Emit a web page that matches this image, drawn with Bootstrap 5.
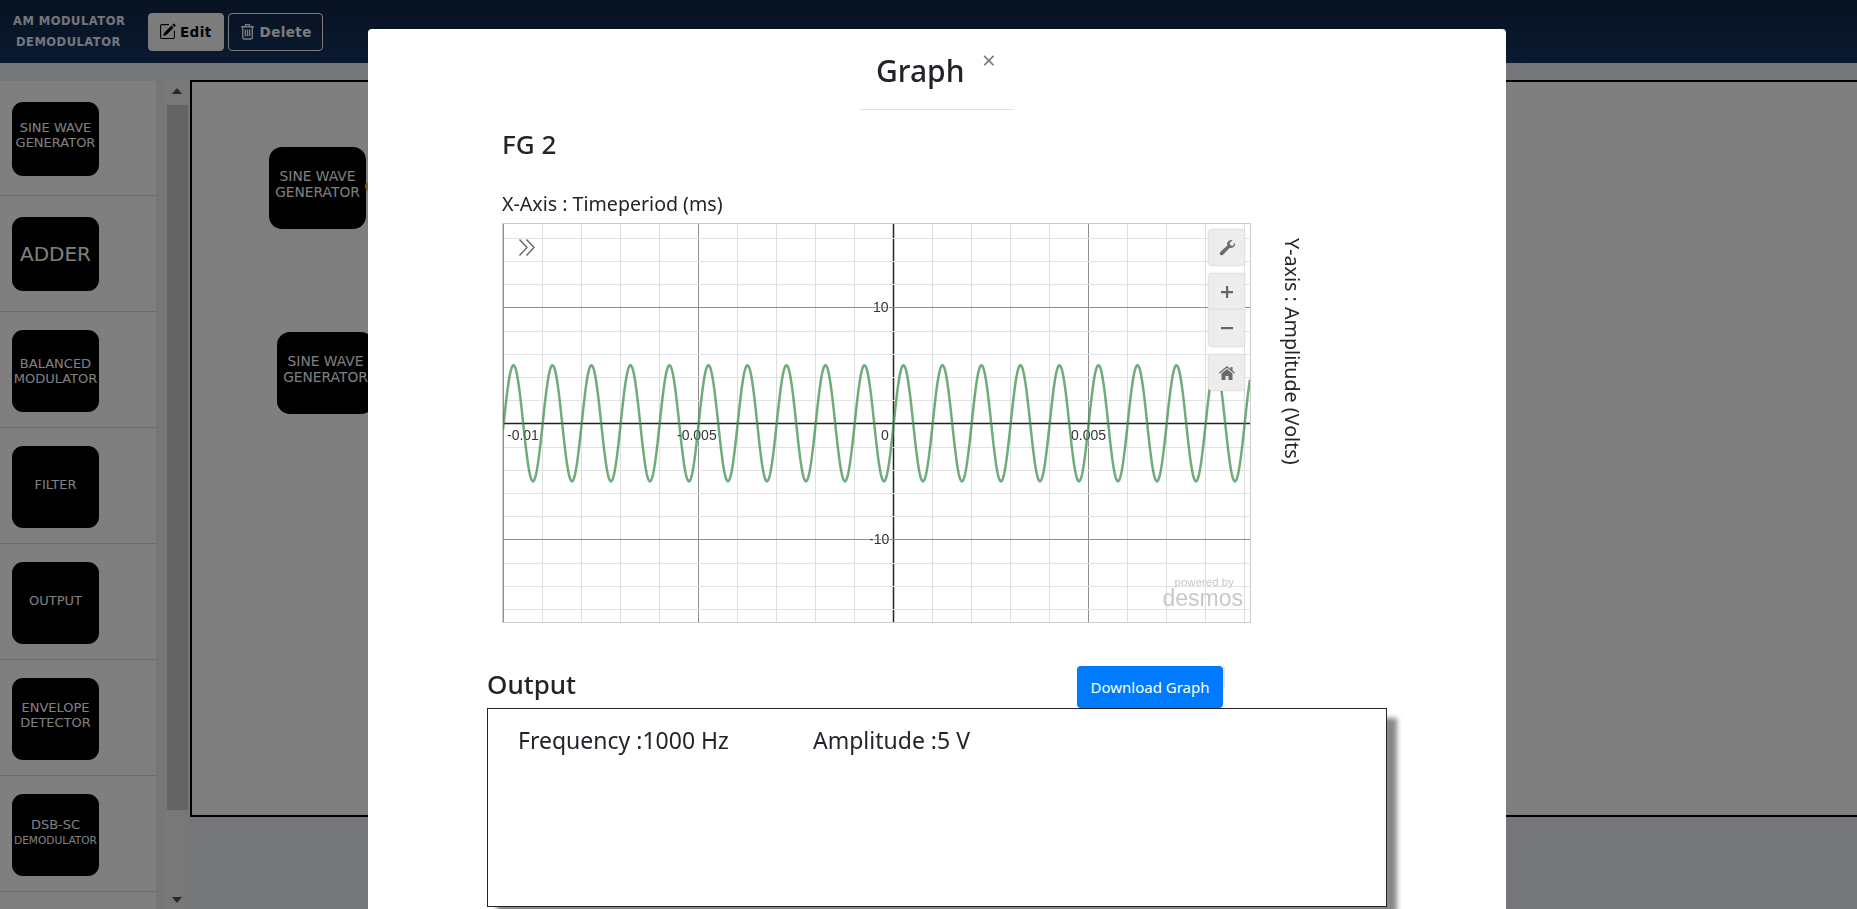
<!DOCTYPE html>
<html lang="en">

<head>
    <meta charset="UTF-8" />
    <meta name="viewport" content="width=device-width, initial-scale=1.0" />
    <title>AM Modulator Demodulator</title>
    <link rel="stylesheet" href="https://cdn.jsdelivr.net/npm/bootstrap@5.3.0/dist/css/bootstrap.min.css" />
    <style>
        html, body {
            height: 100%;
            overflow: hidden;
        }

        body {
            background: #e8ecf4;
            font-family: "Noto Sans", "Open Sans", sans-serif;
        }

        /* page under the backdrop */
        .top-bar {
            height: 63px;
            background: linear-gradient(#0f2444, #153462);
            padding-left: 13px;
        }

        .brand-text {
            width: 135px;
            font: bold 11.5px/21px "DejaVu Sans", sans-serif;
            color: #e6ecf5;
            letter-spacing: .5px;
        }

        .brand-text span {
            display: block;
            padding-left: 3px;
        }

        .bar-btn {
            height: 38px;
            font: bold 13.5px "DejaVu Sans", sans-serif;
            letter-spacing: .4px;
            padding: 0 10px;
            border-radius: 4px;
        }

        .bar-btn svg {
            width: 17px;
            height: 17px;
            margin-right: 4px;
            vertical-align: -3px;
        }

        .edit-btn {
            padding-right: 11px;
        }

        .delete-btn {
            margin-left: 4px;
        }

        .work-area {
            padding-top: 17px;
            height: calc(100vh - 63px);
        }

        .side-list {
            width: 156px;
            flex-shrink: 0;
            margin-top: 1px;
            background: #fff;
            overflow: hidden;
        }

        .side-item {
            height: 116px;
            border-bottom: 1px solid #ddd;
            padding: 18px 0 0 12px;
        }

        .side-item.first-item {
            height: 115px;
            padding-top: 21px;
        }

        .side-item.short-item {
            padding-top: 21px;
        }

        .block-tile {
            width: 87px;
            height: 82px;
            background: #000;
            border-radius: 11px;
            color: #fff;
            text-align: center;
            font: 13px/14.5px "DejaVu Sans", sans-serif;
            overflow: hidden;
        }

        .short-item .block-tile {
            height: 74px;
        }

        .tile-two {
            padding-top: 19px;
        }

        .tile-adder {
            font-size: 20px;
            line-height: 24px;
            padding-top: 25px;
        }

        .tile-bal {
            padding-top: 27px;
        }

        .tile-one {
            padding-top: 32px;
        }

        .tile-env {
            padding-top: 23px;
        }

        .tile-demod {
            padding-top: 24px;
        }

        .tile-demod small {
            display: block;
            font-size: 10.6px;
            white-space: nowrap;
        }

        .scroll-track {
            width: 25px;
            flex-shrink: 0;
            margin-left: 9px;
            background: #f1f1f1;
            padding: 25px 2px 9px;
        }

        .scroll-thumb {
            height: 705px;
            background: #c6c6c6;
        }

        .arrow-up,
        .arrow-down {
            position: absolute;
            left: 7px;
            width: 0;
            height: 0;
            border-left: 5.5px solid transparent;
            border-right: 5.5px solid transparent;
        }

        .arrow-up {
            top: 8px;
            border-bottom: 6px solid #505050;
        }

        .arrow-down {
            bottom: 6px;
            border-top: 6px solid #505050;
        }

        .block-canvas {
            flex: 1 1 auto;
            height: 737px;
            border: 2px solid #000;
            border-right: 0;
            background: #fff;
        }

        .placed-node {
            position: absolute;
            width: 97px;
            height: 82px;
            background: #000;
            color: #fff;
            border-radius: 13px;
            text-align: center;
            font: 13.8px/15.5px "DejaVu Sans", sans-serif;
            padding-top: 22px;
        }

        .node-a {
            left: 77px;
            top: 65px;
        }

        .node-b {
            left: 85px;
            top: 250px;
        }

        .port-dot {
            position: absolute;
            right: -8px;
            top: 35px;
            width: 9px;
            height: 9px;
            border-radius: 50%;
            background: #ffc107;
        }

        /* graph modal */
        .graph-dialog {
            max-width: none;
            width: 1138px;
            margin: 29px 0 0 368px;
        }

        .graph-content {
            height: 1100px;
            border: 0;
            border-radius: 4px;
        }

        .graph-head {
            width: 154px;
            height: 81px;
            margin: 0 auto;
            padding: 23px 16px 0;
            border-bottom: 1px solid #dee2e6;
            position: relative;
        }

        .graph-title {
            font-size: 30px;
            line-height: 38px;
            font-weight: 500;
            color: #212529;
            margin: 0;
        }

        .head-close {
            position: absolute;
            left: 122px;
            top: 17px;
            font-size: 24px;
            line-height: 28px;
            color: #7b7b7b;
            background: none;
            border: 0;
            padding: 0;
        }

        .plot-area {
            margin-left: 134px;
            padding-top: 15px;
        }

        .fg-name {
            font-size: 26px;
            line-height: 38px;
            font-weight: 500;
            color: #212529;
            margin: 0 0 28px;
        }

        .axis-x {
            font-size: 19.6px;
            line-height: 26px;
            color: #212529;
            margin-bottom: 6px;
        }

        .plot-box {
            width: 749px;
            height: 400px;
            border: 1px solid #ccc;
            overflow: hidden;
        }

        .plot-box svg {
            display: block;
        }

        .axis-y {
            writing-mode: vertical-rl;
            font-size: 19.7px;
            line-height: 24px;
            color: #212529;
            margin: 15px 0 0 29px;
            white-space: nowrap;
        }

        .calc-tool {
            position: absolute;
            right: 5px;
            width: 37px;
            display: flex;
            align-items: center;
            justify-content: center;
            background: #ededed;
            border: 1px solid #e2e2e2;
            border-radius: 4px;
            box-shadow: 0 0 2px rgba(0, 0, 0, .12);
        }

        .tool-wrench {
            top: 5px;
            height: 37px;
        }

        .tool-plus {
            top: 49px;
            height: 37px;
            border-radius: 4px 4px 0 0;
        }

        .tool-minus {
            top: 85px;
            height: 38px;
            border-radius: 0 0 4px 4px;
        }

        .tool-home {
            top: 130px;
            height: 37px;
        }

        .expand-mark {
            position: absolute;
            left: 15px;
            top: 14px;
        }

        .desmos-mark {
            position: absolute;
            right: 7px;
            bottom: 14px;
            text-align: right;
            font-family: "Liberation Sans", sans-serif;
            color: #c8c8c8;
        }

        .desmos-mark div:first-child {
            font-size: 11.5px;
            line-height: 12px;
            padding-right: 9px;
        }

        .desmos-mark div:last-child {
            font-size: 23px;
            line-height: 20px;
        }

        .output-area {
            width: 900px;
            margin-left: 119px;
            padding-top: 42px;
        }

        .output-title {
            font-size: 26px;
            line-height: 38px;
            font-weight: 500;
            color: #212529;
            margin: 0;
            padding-bottom: 5px;
        }

        .download-btn {
            position: relative;
            width: 146px;
            height: 42px;
            margin-right: 164px;
            background: #007bff;
            border: 0;
            border-radius: 4px;
            color: #fff;
            font-size: 15px;
            padding: 0;
        }

        .download-btn::after {
            content: "";
            position: absolute;
            left: 100%;
            top: 0;
            width: 2px;
            height: 23px;
            background: #e6e6e6;
        }

        .output-box {
            height: 199px;
            border: 1px solid #212529;
            box-shadow: 10px 10px 5px #888;
            padding: 13px 30px;
            font-size: 23px;
            line-height: 36px;
            color: #212529;
            background: #fff;
        }

        .freq-cell {
            width: 295px;
        }
    </style>
</head>

<body>
    <!-- Page under the backdrop -->
    <nav class="top-bar d-flex align-items-center">
        <div class="brand-text">AM MODULATOR<span>DEMODULATOR</span></div>
        <button class="btn btn-light bar-btn edit-btn">
            <svg viewBox="0 0 16 16" fill="currentColor"><path d="M15.502 1.94a.5.5 0 0 1 0 .706L14.459 3.69l-2-2L13.502.646a.5.5 0 0 1 .707 0l1.293 1.293zm-1.75 2.456-2-2L4.939 9.21a.5.5 0 0 0-.121.196l-.805 2.414a.25.25 0 0 0 .316.316l2.414-.805a.5.5 0 0 0 .196-.12l6.813-6.814z"/><path fill-rule="evenodd" d="M1 13.5A1.5 1.5 0 0 0 2.5 15h11a1.5 1.5 0 0 0 1.5-1.5v-6a.5.5 0 0 0-1 0v6a.5.5 0 0 1-.5.5h-11a.5.5 0 0 1-.5-.5v-11a.5.5 0 0 1 .5-.5H9a.5.5 0 0 0 0-1H2.5A1.5 1.5 0 0 0 1 2.5v11z"/></svg>Edit
        </button>
        <button class="btn btn-outline-light bar-btn delete-btn">
            <svg viewBox="0 0 16 16" fill="none" stroke="currentColor" stroke-width="1.3"><path d="M2 3.5h12M5.5 3.5 6.3 1.5h3.4l.8 2M3.5 3.5v10.2c0 .8.5 1.3 1.2 1.3h6.6c.7 0 1.2-.5 1.2-1.3V3.5M6 6v6.5M8 6v6.5M10 6v6.5"/></svg>Delete
        </button>
    </nav>

    <div class="work-area d-flex">
        <div class="side-list">
            <div class="side-item first-item short-item"><div class="block-tile tile-two">SINE WAVE GENERATOR</div></div>
            <div class="side-item short-item"><div class="block-tile tile-adder">ADDER</div></div>
            <div class="side-item"><div class="block-tile tile-bal">BALANCED MODULATOR</div></div>
            <div class="side-item"><div class="block-tile tile-one">FILTER</div></div>
            <div class="side-item"><div class="block-tile tile-one">OUTPUT</div></div>
            <div class="side-item"><div class="block-tile tile-env">ENVELOPE DETECTOR</div></div>
            <div class="side-item"><div class="block-tile tile-demod">DSB-SC<small>DEMODULATOR</small></div></div>
            <div class="side-item"><div class="block-tile"></div></div>
        </div>

        <div class="scroll-track position-relative">
            <span class="arrow-up"></span>
            <div class="scroll-thumb"></div>
            <span class="arrow-down"></span>
        </div>

        <div class="block-canvas position-relative">
            <div class="placed-node node-a">SINE WAVE GENERATOR<span class="port-dot"></span></div>
            <div class="placed-node node-b">SINE WAVE GENERATOR</div>
        </div>
    </div>

    <div class="modal-backdrop show"></div>

    <!-- Graph modal -->
    <div class="modal d-block overflow-hidden">
        <div class="modal-dialog graph-dialog">
            <div class="modal-content graph-content">
                <div class="graph-head">
                    <h5 class="graph-title">Graph</h5>
                    <button class="head-close" type="button">×</button>
                </div>

                <div class="plot-area">
                    <h3 class="fg-name">FG 2</h3>
                    <div class="axis-x">X-Axis : Timeperiod (ms)</div>
                    <div class="d-flex align-items-start">
                        <div class="plot-box position-relative">
                            <svg id="plotSvg" width="747" height="398"></svg>

                            <svg class="expand-mark" width="19" height="19" viewBox="0 0 19 19" fill="none" stroke="#666" stroke-width="1.4">
                                <path d="M1.5 1.5 9 9.5l-7.500 8M8.500 1.500 16 9.500l-7.500 8" />
                            </svg>

                            <div class="calc-tool tool-wrench">
                                <svg width="18" height="18" viewBox="0 0 18 18" fill="#6b6b6b"><path d="M17 3.500c.5 2.300-.6 4.700-2.900 5.300-.8.200-1.600.2-2.300-.1L5.300 15.600c-.9.900-2.200.900-3 .1-.8-.9-.7-2.100.2-3l6.800-6.300c-.3-.8-.3-1.600 0-2.400C10 1.800 12.300.6 14.600 1.200l-3 2.800.7 2.300 2.300.6z" /></svg>
                            </div>
                            <div class="calc-tool tool-plus">
                                <svg width="14" height="14" viewBox="0 0 14 14" fill="#666"><path d="M6 1h2.200v5H13v2.200H8.200V13H6V8.200H1V6h5z" /></svg>
                            </div>
                            <div class="calc-tool tool-minus">
                                <svg width="14" height="14" viewBox="0 0 14 14" fill="#666"><path d="M1 6h12v2.200H1z" /></svg>
                            </div>
                            <div class="calc-tool tool-home">
                                <svg width="16" height="14" viewBox="0 0 16 14" fill="#6b6b6b"><path d="M8 0 0 6.600l.9 1L8 1.800l7.100 5.800.9-1-2.500-2V1h-2v2zM8 3 2.500 7.500V14h4v-4h3v4h4V7.500z" /></svg>
                            </div>

                            <div class="desmos-mark">
                                <div>powered by</div>
                                <div>desmos</div>
                            </div>
                        </div>
                        <div class="axis-y">Y-axis : Amplitude (Volts)</div>
                    </div>
                </div>

                <div class="output-area">
                    <div class="d-flex justify-content-between align-items-end">
                        <h3 class="output-title">Output</h3>
                        <button class="download-btn" type="button">Download Graph</button>
                    </div>
                    <div class="output-box d-flex">
                        <div class="freq-cell">Frequency :1000 Hz</div>
                        <div>Amplitude :5 V</div>
                    </div>
                </div>
            </div>
        </div>
    </div>

    <script>
        // grid + sine curve, same scale as the desmos calculator
        const originX = 390.7, originY = 199.3, stepX = 39, stepY = 23.2;
        const W = 747, H = 398;
        let grid = "";

        for (let i = -10; i <= 10; i++) {
            const x = Math.floor(originX + i * stepX) + 0.5;
            const color = i === 0 ? "#222" : (i % 5 === 0 ? "#8f8f8f" : "#dedede");
            const w = i === 0 ? 1.5 : 1;
            grid += `<line x1="${x}" y1="0" x2="${x}" y2="${H}" stroke="${color}" stroke-width="${w}" />`;
        }
        for (let j = -9; j <= 9; j++) {
            const y = Math.round(originY + j * stepY) + 0.5;
            const color = j === 0 ? "#222" : (j % 5 === 0 ? "#8f8f8f" : "#e2e2e2");
            const w = j === 0 ? 1.5 : 1;
            grid += `<line x1="1" y1="${y}" x2="${W}" y2="${y}" stroke="${color}" stroke-width="${w}" />`;
        }

        const labels = [
            ["-0.01", 4, 215.5], ["-0.005", 174, 215.5], ["0", 378, 215.5], ["0.005", 568, 215.5],
            ["10", 370, 88], ["-10", 366, 320]
        ];
        labels.forEach(([t, x, y]) => {
            grid += `<text x="${x}" y="${y}" font-family="Liberation Sans" font-size="14" fill="#333" stroke="#fff" stroke-width="2" stroke-opacity=".6" paint-order="stroke">${t}</text>`;
        });

        let pts = [];
        for (let x = 0; x <= W; x += 0.5) {
            const v = 58 * Math.sin((x - originX) / stepX * 2 * Math.PI);
            pts.push(x + "," + (originY - v).toFixed(2));
        }
        grid += `<polyline points="${pts.join(" ")}" fill="none" stroke="#388c46" stroke-opacity=".72" stroke-width="2.500" />`;

        document.getElementById("plotSvg").innerHTML = grid;
    </script>
    <script src="https://cdn.jsdelivr.net/npm/bootstrap@5.3.0/dist/js/bootstrap.bundle.min.js"></script>
</body>

</html>
